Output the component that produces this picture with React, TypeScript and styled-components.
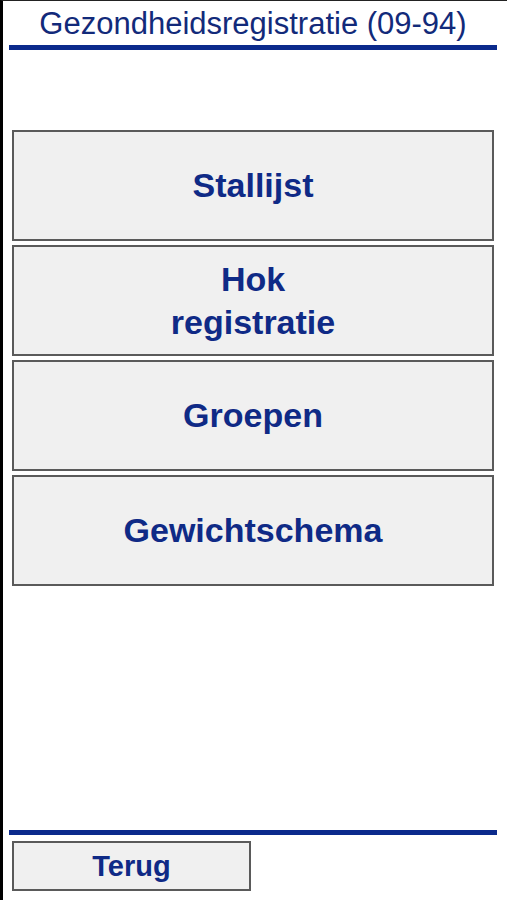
import React from "react";
import styled, { createGlobalStyle } from "styled-components";

const Global = createGlobalStyle`
  html, body { margin: 0; padding: 0; background: #ffffff; }
  body { font-family: "Liberation Sans", Arial, sans-serif; }
`;

const Screen = styled.div`
  box-sizing: border-box;
  width: 507px;
  height: 900px;
  border-left: 3px solid #000;
  border-top: 1px solid #222;
  background: #fff;
  display: flex;
  flex-direction: column;
  padding: 0 10px 0 6px;
`;

const Title = styled.h1`
  margin: 0;
  height: 44px;
  display: flex;
  align-items: center;
  justify-content: center;
  font-size: 31px;
  font-weight: normal;
  color: #122a7a;
  white-space: nowrap;
  padding-top: 1px;
  box-sizing: border-box;
`;

const Rule = styled.div`
  height: 5px;
  background: #0b2a8c;
`;

const Menu = styled.nav`
  display: flex;
  flex-direction: column;
  gap: 4px;
  margin-top: 80px;
  padding-left: 3px;
  padding-right: 3px;
`;

const MenuButton = styled.button<{ $wide?: boolean }>`
  box-sizing: border-box;
  width: ${(p) => (p.$wide ? "100%" : "239px")};
  height: ${(p) => (p.$wide ? "111px" : "50px")};
  background: #f0f0f0;
  border: 2px solid #5a5a5a;
  border-radius: 0;
  margin: 0;
  padding: 0 8px;
  font-family: "Liberation Sans", Arial, sans-serif;
  font-weight: bold;
  font-size: ${(p) => (p.$wide ? "34px" : "29px")};
  line-height: 43px;
  color: #0f2a86;
  display: flex;
  align-items: center;
  justify-content: center;
  text-align: center;
`;

const Spacer = styled.div`
  flex: 1;
`;

const Footer = styled.footer`
  display: flex;
  flex-direction: column;
  gap: 6px;
  padding-bottom: 9px;
`;

const FooterRow = styled.div`
  display: flex;
  padding-left: 3px;
`;

const items = ["Stallijst", "Hok\nregistratie", "Groepen", "Gewichtschema"];

export default function App() {
  return (
    <>
      <Global />
      <Screen>
        <Title>Gezondheidsregistratie (09-94)</Title>
        <Rule />
        <Menu>
          {items.map((label) => (
            <MenuButton key={label} $wide>
              <span>
                {label.split("\n").map((line, i) => (
                  <React.Fragment key={i}>
                    {i > 0 && <br />}
                    {line}
                  </React.Fragment>
                ))}
              </span>
            </MenuButton>
          ))}
        </Menu>
        <Spacer />
        <Footer>
          <Rule />
          <FooterRow>
            <MenuButton>Terug</MenuButton>
          </FooterRow>
        </Footer>
      </Screen>
    </>
  );
}
